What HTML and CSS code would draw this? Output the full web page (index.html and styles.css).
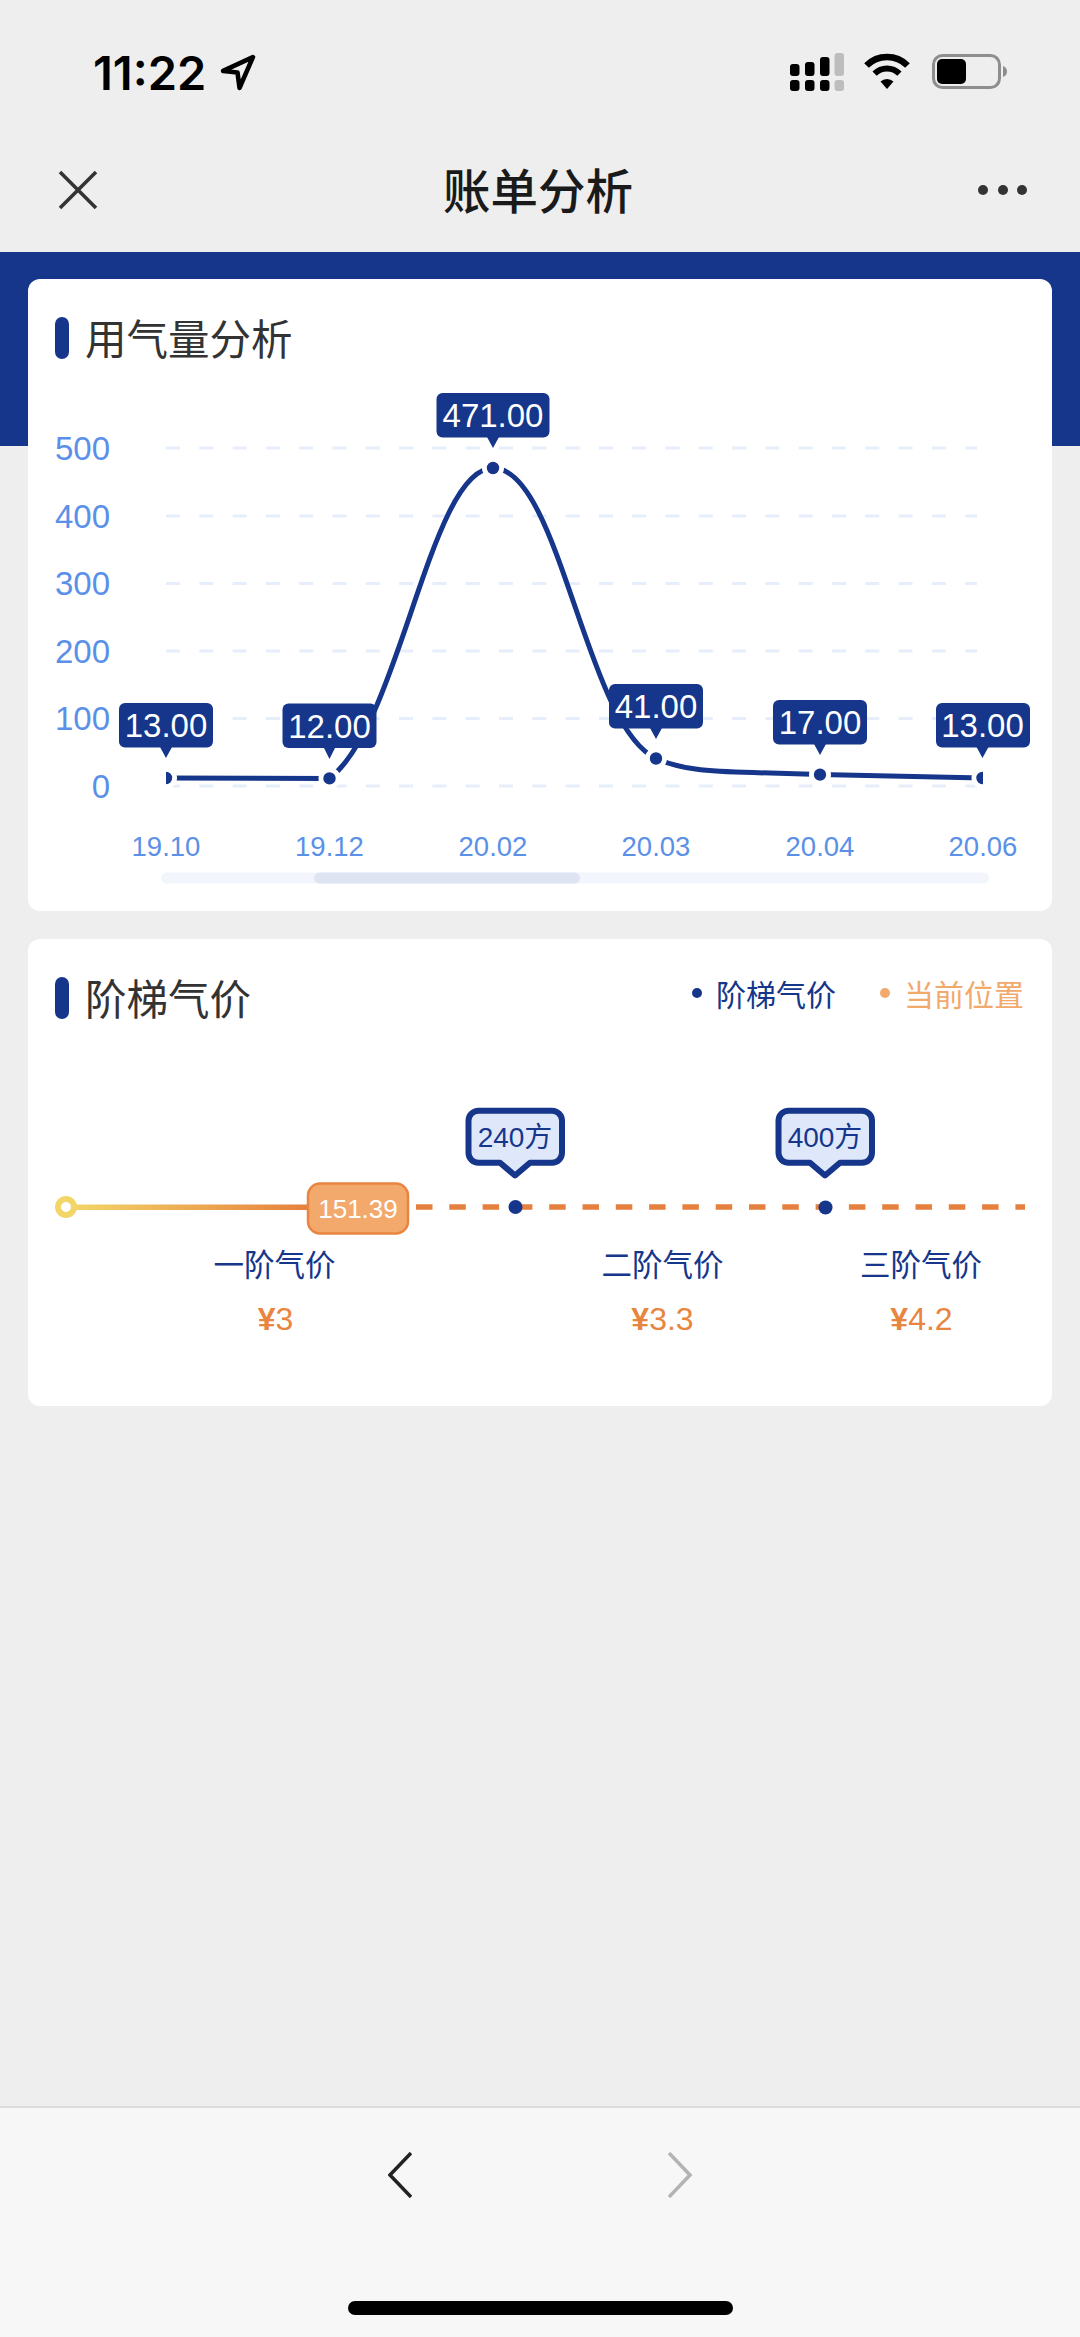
FILE: index.html
```html
<!DOCTYPE html>
<html lang="zh-CN">
<head>
  <meta charset="UTF-8">
  <meta name="viewport" content="width=device-width, initial-scale=1.0">
  <title>账单分析</title>
  <link rel="stylesheet" href="styles.css">
</head>
<body>
  <div class="status-bar">
    <div class="status-left">
      <span class="time">11:22</span>
      <svg class="location" viewBox="0 0 36 36">
        <path d="M33 3 L4 16.500 L18 18 L20 33 Z"/>
      </svg>
    </div>
    <svg class="status-icons" viewBox="788 50 222 45">
      <!-- signal -->
      <rect x="790" y="64" width="9.500" height="12" rx="3"/>
      <rect x="805" y="62" width="9.500" height="14" rx="3"/>
      <rect x="820" y="57" width="9.500" height="19" rx="3"/>
      <rect class="off" x="834.500" y="53" width="9.500" height="23" rx="3"/>
      <rect x="790" y="80" width="9.500" height="11" rx="3"/>
      <rect x="805" y="80" width="9.500" height="11" rx="3"/>
      <rect x="820" y="80" width="9.500" height="11" rx="3"/>
      <rect class="off" x="834.500" y="80" width="9.500" height="11" rx="3"/>
      <!-- wifi -->
      <path class="wifi-arc" stroke-width="6.500" d="M866.500 65.500 A29 29 0 0 1 907.500 65.500"/>
      <path class="wifi-arc" stroke-width="6" d="M874.600 73.600 A17.500 17.500 0 0 1 899.400 73.600"/>
      <path d="M880.500 81.500 A9.500 9.500 0 0 1 893.500 81.500 L887 89 Z"/>
      <!-- battery -->
      <rect class="battery-shell" x="933.500" y="55.500" width="66" height="32" rx="9"/>
      <rect x="937" y="59" width="29" height="25" rx="5"/>
      <path class="battery-nub" d="M1003 66 C1006 67 1007 69 1007 71.500 C1007 74 1006 76 1003 77 Z"/>
    </svg>
  </div>

  <div class="nav-bar">
    <svg class="nav-close" viewBox="0 0 40 40">
      <path d="M2 2 L38 38 M38 2 L2 38"/>
    </svg>
    <h1 class="nav-title">账单分析</h1>
    <div class="nav-more">
      <span></span><span></span><span></span>
    </div>
  </div>

  <div class="content">
    <section class="card">
      <div class="card-head">
        <h2 class="card-title">用气量分析</h2>
      </div>
      <svg class="chart chart-usage" viewBox="28 380 1024 531">
        <defs>
          <clipPath id="plot-clip">
            <rect x="166" y="380" width="817" height="460"/>
          </clipPath>
        </defs>

        <g class="grid">
          <line x1="166" x2="977" y1="448" y2="448"/>
          <line x1="166" x2="977" y1="516" y2="516"/>
          <line x1="166" x2="977" y1="583.500" y2="583.500"/>
          <line x1="166" x2="977" y1="651" y2="651"/>
          <line x1="166" x2="977" y1="718.500" y2="718.500"/>
          <line x1="166" x2="977" y1="786" y2="786"/>
        </g>

        <g class="axis-y">
          <text x="110" y="460">500</text>
          <text x="110" y="527.500">400</text>
          <text x="110" y="595">300</text>
          <text x="110" y="662.500">200</text>
          <text x="110" y="730">100</text>
          <text x="110" y="797.500">0</text>
        </g>

        <g clip-path="url(#plot-clip)">
          <path class="usage-line" d="M166 778 L329.500 778.400 C400 725 430 468 493 468 C560 468 585 725 656 758.500 C680 769 705 771.500 753 772.600 L820 774.600 L983 778"/>
          <circle class="usage-dot" cx="166" cy="778" r="8.600"/>
          <circle class="usage-dot" cx="329.500" cy="778.400" r="8.600"/>
          <circle class="usage-dot" cx="493" cy="468" r="8.600"/>
          <circle class="usage-dot" cx="656" cy="758.500" r="8.600"/>
          <circle class="usage-dot" cx="820" cy="774.600" r="8.600"/>
          <circle class="usage-dot" cx="982.500" cy="778" r="8.600"/>
        </g>

        <g class="tip">
          <rect x="119" y="703" width="94" height="44.500" rx="6"/>
          <polygon points="160,747 172,747 166,758"/>
          <text x="166" y="737">13.00</text>
        </g>
        <g class="tip">
          <rect x="282.500" y="703.500" width="94" height="44.500" rx="6"/>
          <polygon points="323.500,747 335.500,747 329.500,759"/>
          <text x="329.500" y="737.500">12.00</text>
        </g>
        <g class="tip">
          <rect x="436.500" y="393" width="113" height="44.500" rx="6"/>
          <polygon points="487,437 499,437 493,448"/>
          <text x="493" y="427">471.00</text>
        </g>
        <g class="tip">
          <rect x="609" y="684" width="94" height="44.500" rx="6"/>
          <polygon points="650,728 662,728 656,739"/>
          <text x="656" y="718">41.00</text>
        </g>
        <g class="tip">
          <rect x="773" y="700" width="94" height="44.500" rx="6"/>
          <polygon points="814,744 826,744 820,755"/>
          <text x="820" y="734">17.00</text>
        </g>
        <g class="tip">
          <rect x="936" y="703" width="94" height="44.500" rx="6"/>
          <polygon points="976.500,747 988.500,747 982.500,758"/>
          <text x="982.500" y="737">13.00</text>
        </g>

        <g class="axis-x">
          <text x="166" y="856">19.10</text>
          <text x="329.500" y="856">19.12</text>
          <text x="493" y="856">20.02</text>
          <text x="656" y="856">20.03</text>
          <text x="820" y="856">20.04</text>
          <text x="983" y="856">20.06</text>
        </g>

        <rect class="scroll-track" x="161" y="872.500" width="828" height="11" rx="5.500"/>
        <rect class="scroll-thumb" x="314" y="872.500" width="266" height="11" rx="5.500"/>
      </svg>
    </section>

    <section class="card">
      <div class="card-head">
        <h2 class="card-title">阶梯气价</h2>
        <div class="legend">
          <span class="legend-item legend-tier">阶梯气价</span>
          <span class="legend-item legend-now">当前位置</span>
        </div>
      </div>
      <svg class="chart chart-tiers" viewBox="28 1040 1024 366">
        <defs>
          <linearGradient id="used-gradient" gradientUnits="userSpaceOnUse" x1="70" y1="0" x2="310" y2="0">
            <stop offset="0" stop-color="#f3d668"/>
            <stop offset="1" stop-color="#e67f3e"/>
          </linearGradient>
        </defs>

        <line class="tier-dash" x1="416" x2="1025" y1="1207" y2="1207"/>
        <rect x="70" y="1204.500" width="242" height="5.500" fill="url(#used-gradient)"/>
        <circle class="tier-start" cx="66" cy="1207" r="8"/>

        <circle class="tier-dot" cx="515.500" cy="1207" r="7"/>
        <circle class="tier-dot" cx="825.500" cy="1207.500" r="7"/>

        <rect class="now-box" x="308" y="1183.500" width="100" height="50" rx="12"/>
        <text class="now-text" x="358" y="1217.500">151.39</text>

        <g class="callout">
          <path d="M478.500 1110.700 H552 a10 10 0 0 1 10 10 V1152.700 a10 10 0 0 1 -10 10 H530 L515 1175.500 L500 1162.700 H478.500 a10 10 0 0 1 -10 -10 V1120.700 a10 10 0 0 1 10 -10 Z"/>
          <text x="515" y="1147">240方</text>
        </g>
        <g class="callout callout-second">
          <path d="M478.500 1110.700 H552 a10 10 0 0 1 10 10 V1152.700 a10 10 0 0 1 -10 10 H530 L515 1175.500 L500 1162.700 H478.500 a10 10 0 0 1 -10 -10 V1120.700 a10 10 0 0 1 10 -10 Z"/>
          <text x="515" y="1147">400方</text>
        </g>

        <g class="tier-name">
          <text x="274.500" y="1276">一阶气价</text>
          <text x="662.500" y="1276">二阶气价</text>
          <text x="921" y="1276">三阶气价</text>
        </g>
        <g class="tier-price">
          <text x="275.500" y="1330"><tspan class="yen">¥</tspan>3</text>
          <text x="662.500" y="1330"><tspan class="yen">¥</tspan>3.3</text>
          <text x="921.500" y="1330"><tspan class="yen">¥</tspan>4.2</text>
        </g>
      </svg>
    </section>
  </div>

  <div class="bottom-bar">
    <div class="bottom-arrows">
      <svg class="arrow" viewBox="0 0 24 46"><path d="M23 1 L2 23 L23 45"/></svg>
      <svg class="arrow arrow-off" viewBox="0 0 24 46"><path d="M1 1 L22 23 L1 45"/></svg>
    </div>
    <div class="home-indicator"></div>
  </div>
</body>
</html>
```

FILE: styles.css
```css
* {
  box-sizing: border-box;
}

body {
  margin: 0;
  width: 1080px;
  height: 2337px;
  overflow: hidden;
  display: flex;
  flex-direction: column;
  background-color: #eeeeee;
  font-family: "Liberation Sans", "Noto Sans CJK SC", sans-serif;
}

/* status bar */
.status-bar {
  height: 120px;
  padding: 50px 70px 0 93px;
  display: flex;
  justify-content: space-between;
  align-items: flex-start;
}

.status-left {
  display: flex;
  align-items: center;
  gap: 13px;
}

.time {
  font-family: Inter, sans-serif;
  font-size: 47px;
  font-weight: 600;
  line-height: 45px;
  color: #000;
}

.location {
  width: 37px;
  height: 37px;
  fill: none;
  stroke: #000;
  stroke-width: 4.500;
  stroke-linejoin: round;
}

.status-icons {
  width: 222px;
  height: 45px;
  fill: #000;
}

.status-icons .off {
  fill: #bdbdbd;
}

.wifi-arc {
  fill: none;
  stroke: #000;
}

.battery-shell {
  fill: none;
  stroke: #8e8e8e;
  stroke-width: 3;
}

.battery-nub {
  fill: #8e8e8e;
}

/* nav */
.nav-bar {
  height: 132px;
  padding: 4px 53px 0 58px;
  display: flex;
  justify-content: space-between;
  align-items: center;
}

.nav-close {
  width: 40px;
  height: 40px;
  margin-top: 4px;
  fill: none;
  stroke: #333;
  stroke-width: 3.6;
}

.nav-title {
  margin: 0;
  font-family: "Noto Sans CJK SC", sans-serif;
  font-size: 47.500px;
  font-weight: 500;
  color: #1a1a1a;
}

.nav-more {
  width: 49px;
  margin-top: 4px;
  display: flex;
  justify-content: space-between;
}

.nav-more span {
  width: 10px;
  height: 10px;
  border-radius: 50%;
  background-color: #333;
}

/* cards */
.content {
  padding: 27px 28px;
  background: linear-gradient(#15368a 194px, #eeeeee 194px);
  display: flex;
  flex-direction: column;
  gap: 28px;
}

.card {
  background-color: #fff;
  border-radius: 12px;
}

.card-head {
  height: 101px;
  padding: 38px 28px 0 27px;
  display: flex;
  justify-content: space-between;
  align-items: flex-start;
}

.card-title {
  margin: 0;
  height: 42px;
  padding-left: 30px;
  position: relative;
  font-family: "Noto Sans CJK SC", sans-serif;
  font-size: 41.500px;
  font-weight: 400;
  line-height: 40px;
  color: #333;
}

.card-title::before {
  content: "";
  position: absolute;
  left: 0;
  top: 0;
  width: 14px;
  height: 42px;
  border-radius: 7px;
  background-color: #15368a;
}

.legend {
  display: flex;
  gap: 44px;
  margin-top: -2px;
}

.legend-item {
  display: flex;
  align-items: center;
  gap: 14px;
  font-family: "Noto Sans CJK SC", sans-serif;
  font-size: 30px;
  line-height: 36px;
}

.legend-item::before {
  content: "";
  width: 10px;
  height: 10px;
  border-radius: 50%;
  background-color: currentColor;
}

.legend-tier {
  color: #15368a;
}

.legend-now {
  color: #f2a96c;
}

/* charts */
.chart {
  display: block;
  width: 1024px;
}

.chart-usage {
  height: 531px;
}

.chart-tiers {
  height: 366px;
}

.grid line {
  stroke: #e7eefb;
  stroke-width: 3;
  stroke-dasharray: 14 19.3;
}

.axis-y text {
  font-size: 33px;
  fill: #5b90e8;
  text-anchor: end;
}

.axis-x text {
  font-size: 27.500px;
  fill: #5b90e8;
  text-anchor: middle;
}

.usage-line {
  fill: none;
  stroke: #15368a;
  stroke-width: 5;
}

.usage-dot {
  fill: #15368a;
  stroke: #fff;
  stroke-width: 4.800;
}

.tip rect,
.tip polygon {
  fill: #15368a;
}

.tip text {
  font-size: 33px;
  fill: #fff;
  text-anchor: middle;
}

.scroll-track {
  fill: #f3f5fc;
}

.scroll-thumb {
  fill: #dfe4f3;
}

.tier-dash {
  stroke: #e6803f;
  stroke-width: 5.500;
  stroke-dasharray: 16.500 16.800;
}

.tier-start {
  fill: #fff;
  stroke: #f3d668;
  stroke-width: 6;
}

.tier-dot {
  fill: #15368a;
}

.now-box {
  fill: #f3a96b;
  stroke: #e88540;
  stroke-width: 2.500;
}

.now-text {
  font-size: 26px;
  fill: #fff;
  text-anchor: middle;
}

.callout path {
  fill: #dfe8fb;
  stroke: #15368a;
  stroke-width: 6;
  stroke-linejoin: round;
}

.callout text {
  font-size: 28px;
  fill: #15368a;
  text-anchor: middle;
}

.callout-second {
  transform: translateX(310px);
}

.tier-name text {
  font-size: 30.500px;
  fill: #15368a;
  text-anchor: middle;
}

.tier-price text {
  font-size: 32px;
  fill: #e8853f;
  text-anchor: middle;
}

.tier-price .yen {
  font-weight: 700;
}

/* bottom toolbar */
.bottom-bar {
  margin-top: auto;
  height: 231px;
  border-top: 2px solid #dcdcdc;
  background-color: #f7f7f7;
  display: flex;
  flex-direction: column;
  align-items: center;
}

.bottom-arrows {
  padding-top: 44px;
  display: flex;
  gap: 256px;
}

.arrow {
  display: block;
  width: 24px;
  height: 46px;
  fill: none;
  stroke: #222;
  stroke-width: 3.500;
}

.arrow-off {
  stroke: #b3b3b3;
}

.home-indicator {
  margin-top: 103px;
  width: 385px;
  height: 14px;
  border-radius: 7px;
  background-color: #000;
}
```
